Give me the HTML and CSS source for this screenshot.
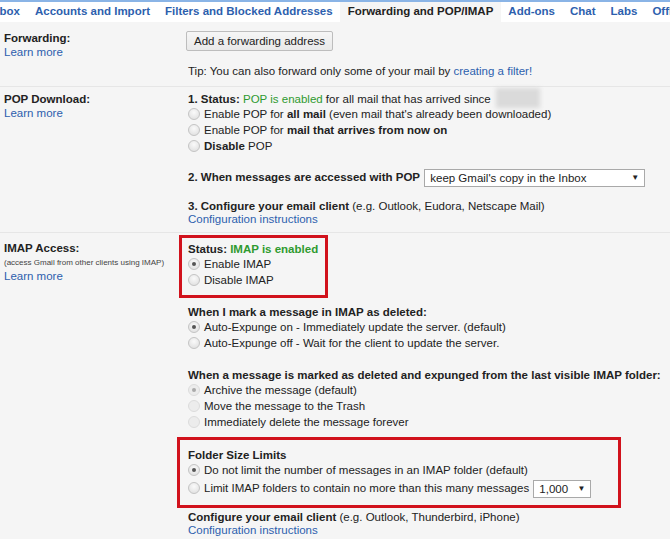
FILE: index.html
```html
<!DOCTYPE html>
<html lang="en">
<head>
  <meta charset="UTF-8">
  <title>Settings - Forwarding and POP/IMAP</title>
  <link rel="stylesheet" href="styles.css">
</head>
<body>

  <div class="tabs">
    <a class="tab first">box</a>
    <a class="tab">Accounts and Import</a>
    <a class="tab">Filters and Blocked Addresses</a>
    <a class="tab active">Forwarding and POP/IMAP</a>
    <a class="tab">Add-ons</a>
    <a class="tab">Chat</a>
    <a class="tab">Labs</a>
    <a class="tab">Offline</a>
  </div>

  <div class="settings">

    <div class="row row-fwd">
      <div class="label">
        <b>Forwarding:</b><br>
        <a class="link">Learn more</a>
      </div>
      <div class="value">
        <div class="button">Add a forwarding address</div>
        <p class="tip">Tip: You can also forward only some of your mail by <a class="link">creating a filter!</a></p>
      </div>
    </div>

    <div class="row row-pop">
      <div class="label">
        <b>POP Download:</b><br>
        <a class="link">Learn more</a>
      </div>
      <div class="value">
        <div class="group">
          <div><b>1. Status: </b><span class="ok">POP is enabled</span> for all mail that has arrived since <span class="blur"></span></div>
          <div class="opt"><span class="radio"></span>Enable POP for <b>all mail</b> (even mail that's already been downloaded)</div>
          <div class="opt"><span class="radio"></span>Enable POP for <b>mail that arrives from now on</b></div>
          <div class="opt"><span class="radio"></span><b>Disable</b> POP</div>
        </div>
        <div class="group select-line">
          <b>2. When messages are accessed with POP</b>
          <span class="select wide">keep Gmail's copy in the Inbox<span class="arrow">&#9660;</span></span>
        </div>
        <div class="group tight">
          <b>3. Configure your email client</b> (e.g. Outlook, Eudora, Netscape Mail)<br>
          <a class="link">Configuration instructions</a>
        </div>
      </div>
    </div>

    <div class="row row-imap">
      <div class="label">
        <b>IMAP Access:</b>
        <span class="small">(access Gmail from other clients using IMAP)</span>
        <a class="link learn">Learn more</a>
      </div>
      <div class="value">
        <div class="highlight first-box">
          <div><b>Status: </b><b class="ok">IMAP is enabled</b></div>
          <div class="opt"><span class="radio checked"></span>Enable IMAP</div>
          <div class="opt"><span class="radio"></span>Disable IMAP</div>
        </div>
        <div class="group mark-deleted">
          <b>When I mark a message in IMAP as deleted:</b>
          <div class="opt"><span class="radio checked"></span>Auto-Expunge on - Immediately update the server. (default)</div>
          <div class="opt"><span class="radio"></span>Auto-Expunge off - Wait for the client to update the server.</div>
        </div>
        <div class="group expunged">
          <b>When a message is marked as deleted and expunged from the last visible IMAP folder:</b>
          <div class="opt"><span class="radio checked disabled"></span>Archive the message (default)</div>
          <div class="opt"><span class="radio disabled"></span>Move the message to the Trash</div>
          <div class="opt"><span class="radio disabled"></span>Immediately delete the message forever</div>
        </div>
        <div class="highlight second-box">
          <b>Folder Size Limits</b>
          <div class="opt"><span class="radio checked"></span>Do not limit the number of messages in an IMAP folder (default)</div>
          <div class="opt limit"><span class="radio"></span>Limit IMAP folders to contain no more than this many messages
            <span class="select small-select">1,000<span class="arrow">&#9660;</span></span></div>
        </div>
        <div class="group tight">
          <b>Configure your email client</b> (e.g. Outlook, Thunderbird, iPhone)<br>
          <a class="link">Configuration instructions</a>
        </div>
      </div>
    </div>

  </div>

</body>
</html>
```

FILE: styles.css
```css
body {
  margin: 0; padding: 0;
  background: #f5f5f5;
  font-family: "Liberation Sans", Arial, sans-serif;
  font-size: 11.5px;
  line-height: 14px;
  color: #222;
  width: 670px;
  overflow: hidden;
}
b { font-weight: bold; }
.link { color: #2d5fae; cursor: pointer; }

/* tabs */
.tabs {
  display: flex;
  height: 20px;
  background: #fff;
  border-top: 2px solid #8ab4e6;
  white-space: nowrap;
  overflow: hidden;
  line-height: 18px;
}
.tab {
  font-weight: bold;
  color: #2d5fae;
  padding: 0 7.5px;
  flex: none;
}
.tab.first { margin-left: -8px; }
.tab.active { background: #f5f5f5; color: #222; }

/* rows */
.row {
  display: grid;
  grid-template-columns: 184px 1fr;
  border-bottom: 1px solid #e6e6e6;
  white-space: nowrap;
}
.row:last-child { border-bottom: none; }
.row-fwd { padding: 9px 0 8px 4px; }
.row-pop { padding: 5px 0 6px 4px; }
.row-imap { padding: 2px 0 0 4px; }
.row-imap .label { padding-top: 6px; }
.row-imap .label b { display: block; }
.small { display: block; font-size: 8px; line-height: 14px; margin-top: 1px; color: #444; }
.learn { display: block; line-height: 13px; }

.button {
  display: inline-block;
  margin-left: -2px;
  background: linear-gradient(#f6f6f6, #e9e9e9);
  border: 1px solid #bdbdbd;
  border-radius: 2px;
  padding: 2px 7px;
}
.tip { margin: 13px 0 0; }

.group { margin-bottom: 15px; }
.group.tight { line-height: 13px; }
.value > :last-child { margin-bottom: 0; }
.ok { color: #2f9a2f; }
.blur {
  display: inline-block;
  width: 44px; height: 20px;
  vertical-align: middle;
  margin: -6px 0 -2px 2px;
  background: #dadada;
  filter: blur(2px);
}
.opt { height: 16px; line-height: 16px; }
.radio {
  display: inline-block;
  vertical-align: -2px;
  width: 12px; height: 12px;
  border-radius: 50%;
  border: 1px solid #c4c4c4;
  background: radial-gradient(circle at 50% 35%, #fafafa, #dcdcdc);
  margin-right: 4px;
  position: relative;
  box-sizing: border-box;
}
.radio.checked::after {
  content: "";
  position: absolute;
  left: 3px; top: 3px;
  width: 4px; height: 4px;
  border-radius: 50%;
  background: #555;
}
.radio.disabled { border-color: #dcdcdc; background: #ececec; }
.radio.checked.disabled::after { background: #aaa; }

.select-line { margin-top: 16px; }
.select {
  display: inline-flex;
  justify-content: space-between;
  align-items: center;
  vertical-align: middle;
  box-sizing: border-box;
  background: #fff;
  border: 1px solid #a9a9a9;
  height: 18px;
  margin: -2px 0;
  padding: 0 5px;
  font-weight: normal;
}
.select.wide { width: 221px; margin-left: 1px; }
.arrow { font-size: 8px; color: #222; }
.small-select { width: 58px; margin-left: 1px; }

.highlight { border: 3px solid #d1121c; }
.first-box {
  width: 137px;
  margin-left: -9px;
  padding: 4px 0 7px 6px;
}
.second-box {
  width: 430px;
  margin-left: -11px;
  padding: 8px 0 7px 8px;
}
.mark-deleted { margin-top: 7px; margin-bottom: 17px; }
.expunged { margin-bottom: 7px; }
.limit { height: 20px; line-height: 20px; }
.second-box + .tight { margin-top: 3px; }
```
